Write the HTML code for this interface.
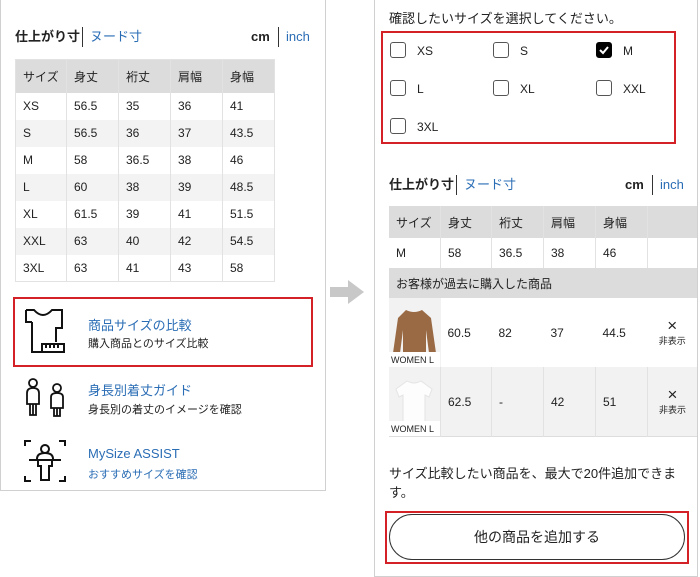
<!DOCTYPE html><html><head><meta charset="utf-8"><style>
*{margin:0;padding:0;box-sizing:border-box}
body{width:700px;height:577px;background:#fff;font-family:"Liberation Sans","Noto Sans CJK JP",sans-serif;color:#222;position:relative;overflow:hidden;font-size:12px}
.a{position:absolute}
.h{line-height:16px;font-size:13px}
.blue{color:#2a6db5}
table{border-collapse:collapse;position:absolute;font-size:12px}
td{padding-left:7px;border-left:1px solid #e2e2e2}
td svg{display:block}
.cb{position:absolute;width:16px;height:16px;border:1.5px solid #555;border-radius:3px}
</style></head><body>
<div class="a" style="left:0;top:0;width:326px;height:491px;border:1px solid #d0d0d0;border-top:none"></div>
<div class="a h" style="left:15px;top:29px;font-weight:bold">仕上がり寸</div>
<div class="a" style="left:82px;top:27px;width:1px;height:20px;background:#333"></div>
<div class="a h blue" style="left:90px;top:29px">ヌード寸</div>
<div class="a h" style="left:251px;top:29px;font-weight:bold">cm</div>
<div class="a" style="left:278px;top:27px;width:1px;height:20px;background:#333"></div>
<div class="a h blue" style="left:286px;top:29px">inch</div>
<table style="left:15px;top:59px;width:260px;border:1px solid #e2e2e2">
<tr style="background:#dcdcdc;height:33px"><td style="width:51px">サイズ</td><td style="width:52px">身丈</td><td style="width:52px">裄丈</td><td style="width:52px">肩幅</td><td>身幅</td></tr>
<tr style="height:27px"><td>XS</td><td>56.5</td><td>35</td><td>36</td><td>41</td></tr>
<tr style="height:27px;background:#f3f3f3"><td>S</td><td>56.5</td><td>36</td><td>37</td><td>43.5</td></tr>
<tr style="height:27px"><td>M</td><td>58</td><td>36.5</td><td>38</td><td>46</td></tr>
<tr style="height:27px;background:#f3f3f3"><td>L</td><td>60</td><td>38</td><td>39</td><td>48.5</td></tr>
<tr style="height:27px"><td>XL</td><td>61.5</td><td>39</td><td>41</td><td>51.5</td></tr>
<tr style="height:27px;background:#f3f3f3"><td>XXL</td><td>63</td><td>40</td><td>42</td><td>54.5</td></tr>
<tr style="height:27px"><td>3XL</td><td>63</td><td>41</td><td>43</td><td>58</td></tr>
</table>
<svg class="a" style="left:330px;top:280px" width="36" height="24"><polygon points="0,7 18,7 18,0 34,12 18,24 18,17 0,17" fill="#c8c8c8"/></svg>
<div class="a" style="left:13px;top:297px;width:300px;height:70px;border:2px solid #d42027"></div>
<svg class="a" style="left:24px;top:308px" width="42" height="46" fill="none" stroke="#111" stroke-width="2"><path d="M8 14 V44 H18 M2 2 H10 Q19 12 28 2 H38 V20 H32 V34 M8 14 H2 V2"/><rect x="18" y="36" width="22" height="8"/><path d="M22 36v4M26 36v4M30 36v4M34 36v4"/></svg>
<div class="a blue" style="left:88px;top:315px;font-size:13px">商品サイズの比較</div>
<div class="a" style="left:88px;top:335px;font-size:11px">購入商品とのサイズ比較</div>
<svg class="a" style="left:24px;top:376px" width="42" height="42" fill="none" stroke="#111" stroke-width="1.8"><circle cx="9" cy="7" r="4"/><path d="M3 28 V17 Q3 12 9 12 Q15 12 15 17 V28 Z M6 28v11h3v-11M9 28v11h3v-11"/><circle cx="33" cy="12" r="4"/><path d="M27 32 V21 Q27 17 33 17 Q39 17 39 21 V32 Z M30 32v8h3v-8M33 32v8h3v-8"/></svg>
<div class="a blue" style="left:88px;top:380px;font-size:13px">身長別着丈ガイド</div>
<div class="a" style="left:88px;top:401px;font-size:11px">身長別の着丈のイメージを確認</div>
<svg class="a" style="left:24px;top:440px" width="42" height="42" fill="none" stroke="#111" stroke-width="2"><path d="M1 6V1h6M35 1h6v5M1 36v5h6M35 41h6v-5"/><circle cx="21" cy="9" r="4"/><path d="M13 19q0-6 8-6t8 6M5 20h32M14 20v6h3v14h8v-14h3v-6"/></svg>
<div class="a blue" style="left:88px;top:446px;font-size:13px">MySize ASSIST</div>
<div class="a blue" style="left:88px;top:466px;font-size:11px">おすすめサイズを確認</div>

<div class="a" style="left:374px;top:0;width:324px;height:577px;border:1px solid #d0d0d0;border-top:none"></div>
<div class="a" style="left:389px;top:8px;font-size:13px">確認したいサイズを選択してください。</div>
<div class="a" style="left:381px;top:31px;width:295px;height:113px;border:2px solid #d42027"></div>
<div class="cb" style="left:390px;top:42px"></div><div class="a" style="left:417px;top:44px">XS</div>
<div class="cb" style="left:493px;top:42px"></div><div class="a" style="left:520px;top:44px">S</div>
<div class="cb" style="left:596px;top:42px;background:#000;border-color:#000"><svg width="14" height="14" style="position:absolute;left:0;top:0"><path d="M3 7l3 3 5-6" stroke="#fff" stroke-width="2" fill="none"/></svg></div><div class="a" style="left:623px;top:44px">M</div>
<div class="cb" style="left:390px;top:80px"></div><div class="a" style="left:417px;top:82px">L</div>
<div class="cb" style="left:493px;top:80px"></div><div class="a" style="left:520px;top:82px">XL</div>
<div class="cb" style="left:596px;top:80px"></div><div class="a" style="left:623px;top:82px">XXL</div>
<div class="cb" style="left:390px;top:118px"></div><div class="a" style="left:417px;top:120px">3XL</div>
<div class="a h" style="left:389px;top:177px;font-weight:bold">仕上がり寸</div>
<div class="a" style="left:456px;top:175px;width:1px;height:20px;background:#333"></div>
<div class="a h blue" style="left:464px;top:177px">ヌード寸</div>
<div class="a h" style="left:625px;top:177px;font-weight:bold">cm</div>
<div class="a" style="left:652px;top:175px;width:1px;height:20px;background:#333"></div>
<div class="a h blue" style="left:660px;top:177px">inch</div>
<table style="left:389px;top:206px;width:308px">
<tr style="background:#dcdcdc;height:32px"><td style="width:51px;border-left:none">サイズ</td><td style="width:51px">身丈</td><td style="width:52px">裄丈</td><td style="width:52px">肩幅</td><td style="width:52px">身幅</td><td></td></tr>
<tr style="height:30px"><td style="border-left:none">M</td><td>58</td><td>36.5</td><td>38</td><td>46</td><td></td></tr>
<tr style="height:30px;background:#dcdcdc"><td colspan="6" style="border-left:none">お客様が過去に購入した商品</td></tr>
<tr style="height:69px"><td style="border-left:none;padding:0;background:#f2f2f2;position:relative;height:69px"><svg width="51" height="69"><path d="M17 12 Q25 16 33 12 L42 20 L47 55 H40 L37 32 V55 H14 V32 L11 55 H4 L9 20 Z" fill="#9a6a45"/><rect x="0" y="54" width="51" height="15" fill="#fff"/></svg><span style="position:absolute;left:2px;bottom:2px;font-size:9px">WOMEN L</span></td><td style="border-left:none">60.5</td><td style="border-left:none">82</td><td style="border-left:none">37</td><td style="border-left:none">44.5</td><td style="border-left:none;text-align:center;padding:0"><div style="font-size:17px;line-height:16px">×</div><div style="font-size:9px">非表示</div></td></tr>
<tr style="height:69px;background:#f2f2f2;border-bottom:1px solid #ddd"><td style="border-left:none;padding:0;position:relative;height:69px"><svg width="51" height="69"><path d="M18 14 Q25 18 32 14 L43 22 L40 30 L36 28 V55 H14 V28 L10 30 L7 22 Z" fill="#fdfdfd" stroke="#e4e4e4"/><rect x="0" y="54" width="51" height="15" fill="#fff"/></svg><span style="position:absolute;left:2px;bottom:2px;font-size:9px">WOMEN L</span></td><td>62.5</td><td>-</td><td>42</td><td>51</td><td style="text-align:center;padding:0"><div style="font-size:17px;line-height:16px">×</div><div style="font-size:9px">非表示</div></td></tr>
</table>
<div class="a" style="left:389px;top:464px;font-size:13px;line-height:19px;width:290px">サイズ比較したい商品を、最大で20件追加できます。</div>
<div class="a" style="left:385px;top:511px;width:304px;height:53px;border:2px solid #d42027"></div>
<div class="a" style="left:389px;top:514px;width:296px;height:46px;border:1.5px solid #333;border-radius:23px;text-align:center;line-height:44px;font-size:14px">他の商品を追加する</div>
</body></html>
